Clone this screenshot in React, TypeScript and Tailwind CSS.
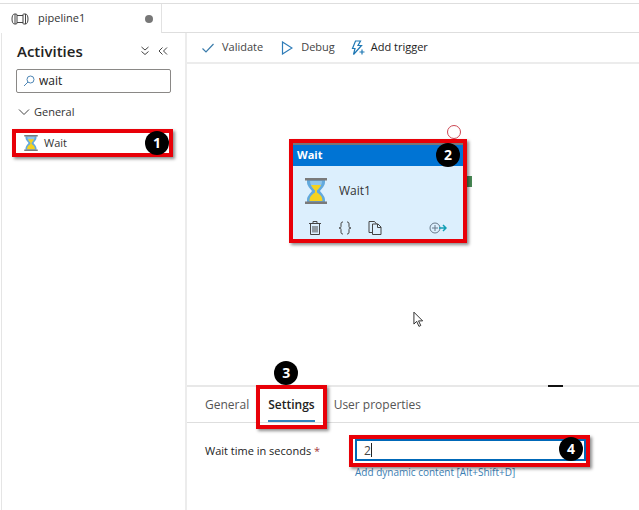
import React, { useState } from "react";
import { clsx } from "clsx";

const Highlight = ({ className }: { className: string }) => (
  <span
    className={clsx(
      "pointer-events-none absolute border-4 border-[#e80008] shadow-[2px_2px_3px_rgba(0,0,0,0.45)]",
      className
    )}
  />
);

const Step = ({ label, className }: { label: string; className: string }) => (
  <span
    className={clsx(
      "pointer-events-none absolute flex size-6 items-center justify-center rounded-full bg-black text-sm font-bold text-white",
      className
    )}
  >
    {label}
  </span>
);

const Hourglass = ({ className }: { className: string }) => (
  <svg viewBox="0 0 22 26" className={className}>
    <path d="M2 2h18v2c0 4-3 6-5 9 2 3 5 5 5 9v2H2v-2c0-4 3-6 5-9-2-3-5-5-5-9z" fill="#62a9dd" />
    <path d="M5 3h12c0 4-2 6-5 9H10C7 9 5 7 5 3z" fill="#8fc5ea" />
    <path d="M6 7h10c-1 2-2.500 4-4 5.500v2c3 2 5.500 4 5.500 8.500h-13c0-4.500 2.500-6.500 5.500-8.500v-2C8.500 11 7 9 6 7z" fill="#f5d21f" />
    <path d="M0 0h22v2.500H0zM0 23.500h22V26H0z" fill="#7a7a7a" />
  </svg>
);

const PipelineIcon = () => (
  <svg viewBox="0 0 18 12" className="h-3 w-[18px]" fill="none" stroke="#444" strokeWidth="1">
    <path d="M4 1h-.5C2 1 1 3 1 6s1 5 2.500 5H4M4 1h1c.8 0 1 .5 1 1v8c0 .5-.2 1-1 1H4M4 1v10" />
    <path d="M6 2.500h6M6 9.500h6" />
    <path d="M12 1.500c0-.3.300-.5.700-.5h1.800C16 1 17 3 17 6s-1 5-2.500 5h-1.800c-.4 0-.7-.2-.7-.5zM14.500 1v10" />
  </svg>
);

const Sidebar = () => {
  const [query, setQuery] = useState("wait");

  return (
    <aside className="w-[185px] shrink-0 border-r-2 border-[#ececec] pl-[11px] pr-3">
      <div className="flex h-9 items-center justify-between pl-1 pr-[5px]">
        <h1 className="text-[15px] font-semibold text-[#222]">Activities</h1>
        <div className="flex items-center gap-2 text-[#444]">
          <button aria-label="Expand all">
            <svg viewBox="0 0 10 10" className="size-[10px]" fill="none" stroke="currentColor">
              <path d="M1.500 1 5 4l3.500-3M1.500 5.500 5 8.500l3.500-3" />
            </svg>
          </button>
          <button aria-label="Collapse pane">
            <svg viewBox="0 0 10 10" className="size-[10px]" fill="none" stroke="currentColor">
              <path d="M4.500 1.500 1 5l3.500 3.500M9 1.500 5.500 5 9 8.500" />
            </svg>
          </button>
        </div>
      </div>

      <div className="ml-[3px] mr-[2px] flex h-6 items-center gap-1 rounded-[2px] border border-[#8a8886] pl-[6px]">
        <svg viewBox="0 0 12 12" className="size-3 shrink-0" fill="none" stroke="#4d86b5">
          <circle cx="7.500" cy="4.500" r="3.500" />
          <path d="M5 7 1 11" />
        </svg>
        <input
          aria-label="Search activities"
          value={query}
          onChange={(e) => setQuery(e.target.value)}
          className="w-full min-w-0 text-xs text-[#222] outline-none"
        />
      </div>

      <button className="ml-[5px] mt-[9px] flex h-5 items-center gap-1 text-[11px] text-[#333]">
        <svg viewBox="0 0 12 8" className="h-2 w-3" fill="none" stroke="#444">
          <path d="m1 1.500 5 5 5-5" />
        </svg>
        General
      </button>

      <div className="relative mt-[7px]">
        <button className="flex h-7 w-full items-center gap-[6px] pl-[11px] text-[11px] text-[#333]">
          <Hourglass className="h-4 w-[14px]" />
          Wait
        </button>
        <Highlight className="inset-y-0 -left-px right-0" />
        <Step label="1" className="right-1 top-[2px]" />
      </div>
    </aside>
  );
};

const Toolbar = () => (
  <div className="flex h-[31px] items-center border-b-2 border-[#ececec] pl-[15px] text-[11px] text-[#444]">
    <button className="flex items-center gap-2">
      <svg viewBox="0 0 12 10" className="h-[10px] w-3" fill="none" stroke="#3b7cab" strokeWidth="1.200">
        <path d="m.5 5.500 3.500 3.500L11.500 1" />
      </svg>
      Validate
    </button>
    <button className="ml-[18px] flex items-center gap-2">
      <svg viewBox="0 0 12 14" className="h-[14px] w-3" fill="none" stroke="#2e7cb8" strokeWidth="1.200">
        <path d="M1.500 1v12L11 7z" />
      </svg>
      Debug
    </button>
    <button className="ml-4 flex items-center gap-[6px] text-[#222]">
      <svg viewBox="0 0 14 16" className="h-4 w-[14px]" fill="none" stroke="#1f78b4" strokeWidth="1.200">
        <path d="M4.500 1H9.500L7 5.500h3.500L2.500 14.500l1.500-6H1.500zM11 9.500v5M8.500 12h5" />
      </svg>
      Add trigger
    </button>
  </div>
);

const WaitNode = () => (
  <div className="absolute left-[106px] top-[79px] w-[170px] bg-[#dceffd]">
    <div className="flex h-[23px] items-center border-t-2 border-[#777] bg-[#0074d4] pl-1 text-[11px] font-bold text-white">
      Wait
    </div>
    <div className="flex h-[50px] items-center gap-3 pl-3 text-xs text-[#333]">
      <Hourglass className="h-[26px] w-[22px]" />
      Wait1
    </div>
    <div className="flex h-[23px] items-center pl-4 pr-4 text-[#444]">
      <button aria-label="Delete">
        <svg viewBox="0 0 12 14" className="h-[14px] w-3" fill="none" stroke="currentColor">
          <path d="M0 2.500h12M4 2.500v-2h4v2M1.500 2.500v11h9v-11M4 5v6.500M6 5v6.500M8 5v6.500" />
        </svg>
      </button>
      <button aria-label="View code" className="ml-[17px]">
        <svg viewBox="0 0 14 14" className="size-[14px]" fill="none" stroke="currentColor">
          <path d="M5 1C3.500 1 3 1.500 3 3v2.500C3 6.500 2.500 7 1 7c1.500 0 2 .5 2 1.500V11c0 1.500.5 2 2 2M9 1c1.500 0 2 .5 2 2v2.500c0 1 .5 1.500 2 1.500-1.500 0-2 .5-2 1.500V11c0 1.500-.5 2-2 2" />
        </svg>
      </button>
      <button aria-label="Clone" className="ml-4">
        <svg viewBox="0 0 14 14" className="size-[14px]" fill="none" stroke="currentColor">
          <path d="M4.500 11.500H1V.5h5.500L8.500 3M4.500 3H10l3 3v7.500H4.500zM9.500 3v3.500H13" />
        </svg>
      </button>
      <button aria-label="Add output" className="ml-auto">
        <svg viewBox="0 0 18 12" className="h-3 w-[18px]" fill="none">
          <circle cx="6" cy="6" r="5" stroke="#68798a" />
          <path d="M6 3v6M3 6h6" stroke="#68798a" />
          <path d="M10 6h7M14 3l3 3-3 3" stroke="#129fb5" strokeWidth="1.500" />
        </svg>
      </button>
    </div>
    <span className="absolute -right-[9px] top-[33px] h-[11px] w-[9px] bg-[#498a55]" />
    <span className="absolute -top-[18px] right-[2px] size-[14px] rounded-full border border-[#cc4652]" />
    <Highlight className="-inset-[4px]" />
    <Step label="2" className="right-[3px] top-0" />
  </div>
);

const PropertiesPanel = () => {
  const [seconds, setSeconds] = useState("2");

  return (
    <section className="h-[125px] border-t-2 border-[#e8e8e8]">
      <div className="relative">
        <span className="absolute -top-[2px] right-[76px] h-[2px] w-[15px] bg-[#111]" />
        <nav className="flex h-9 items-stretch gap-[19px] border-b border-[#dedede] pl-[18px] text-xs text-[#555]">
          <button>General</button>
          <div className="relative flex">
            <button className="font-semibold text-[#222]">Settings</button>
            <span className="absolute inset-x-0 bottom-0 h-[2px] bg-[#2f83bf]" />
            <Highlight className="-left-3 -right-3 -top-[2px] -bottom-[7px]" />
            <Step label="3" className="-top-[26px] left-[6px]" />
          </div>
          <button>User properties</button>
        </nav>
      </div>

      <div className="flex pl-[18px] pt-4">
        <label htmlFor="wait-time" className="w-[150px] shrink-0 pt-1 text-[11px] font-medium text-[#222]">
          Wait time in seconds <span className="text-[#a4373a]">*</span>
        </label>
        <div className="w-[231px]">
          <div className="relative flex">
            <input
              id="wait-time"
              value={seconds}
              onChange={(e) => setSeconds(e.target.value)}
              className="h-[22px] w-full border-2 border-[#0068b8] pl-[7px] text-xs text-[#444] outline-none"
            />
            <span className="absolute left-4 top-1 h-[14px] w-px bg-[#222]" />
            <Highlight className="-left-[6px] -right-1 -top-1 -bottom-[6px]" />
            <Step label="4" className="-top-[2px] right-[3px]" />
          </div>
          <a href="#" className="mt-1 block whitespace-nowrap text-[10px] text-[#3c7fb5]">
            Add dynamic content [Alt+Shift+D]
          </a>
        </div>
      </div>
    </section>
  );
};

export default function App() {
  return (
    <div className="flex min-h-screen flex-col bg-white pt-[3px] font-['Open_Sans','Noto_Sans',sans-serif]">
      <header className="flex h-[30px] border-t border-[#dedede]">
        <div className="flex w-[162px] items-center border-r border-[#e2e2e2] pl-[11px] pr-2 text-[11px] text-[#333]">
          <PipelineIcon />
          <span className="ml-[9px]">pipeline1</span>
          <span className="ml-auto size-2 rounded-full bg-[#777]" />
        </div>
        <div className="flex-1 border-b border-[#dedede]" />
      </header>

      <div className="flex flex-1">
        <div className="w-[2px] border-r border-[#e5e5e5]" />
        <Sidebar />
        <main className="flex min-w-0 flex-1 flex-col">
          <Toolbar />
          <div className="relative min-h-64 flex-1 overflow-hidden">
            <WaitNode />
            <svg viewBox="0 0 12 18" className="absolute left-[226px] top-[247px] h-[17px] w-[11px]">
              <path d="M1 1v13l3-3 2.500 5.500 2-1L6 10.500h4.500z" fill="#fff" stroke="#222" />
            </svg>
          </div>
          <PropertiesPanel />
        </main>
      </div>
    </div>
  );
}
